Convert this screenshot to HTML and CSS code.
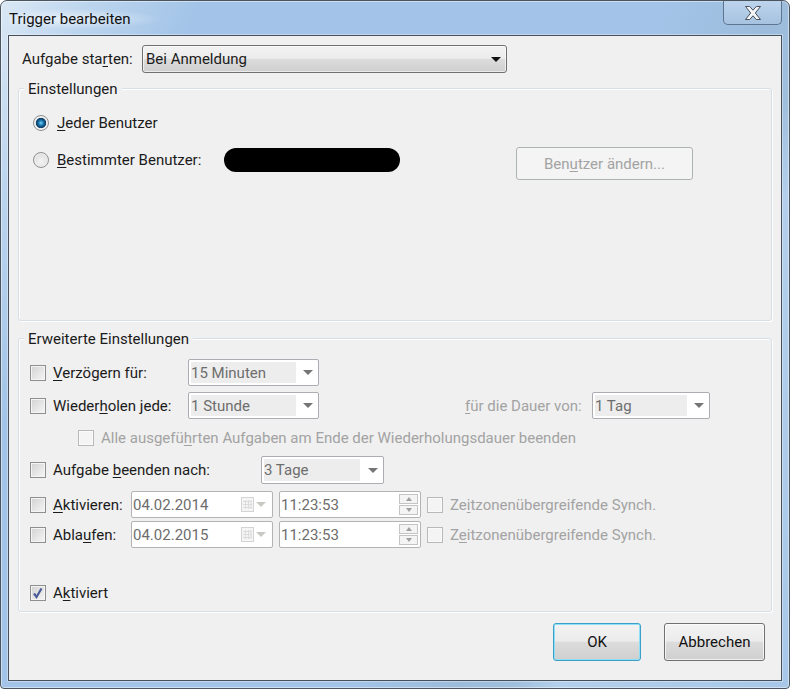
FILE: index.html
```html
<!DOCTYPE html>
<html lang="de">
<head>
<meta charset="utf-8">
<title>Trigger bearbeiten</title>
<link rel="stylesheet" href="styles.css">
</head>
<body>
<div class="window">
  <header class="titlebar">
    <span class="title">Trigger bearbeiten</span>
    <div class="close">
      <svg width="18" height="16" viewBox="0 0 18 16"><path d="M1.500 1.500h4.200L9 5.200l3.300-3.700h4.200L11.300 8l5.200 6.500h-4.200L9 10.800l-3.300 3.700H1.500L6.700 8z" fill="#f4f6f8" stroke="#47505c" stroke-width="1"/></svg>
    </div>
  </header>
  <main class="client">
    <div class="start-row">
      <span class="start-label">Aufgabe sta<u>r</u>ten:</span>
      <div class="combo-main">
        <span>Bei Anmeldung</span>
        <i class="arrow-dark"></i>
      </div>
    </div>

    <section class="group group-settings">
      <span class="legend">Einstellungen</span>
      <div class="radio-row">
        <span class="radio radio-on"></span>
        <span class="radio-label"><u>J</u>eder Benutzer</span>
      </div>
      <div class="radio-row radio-row-2">
        <span class="radio"></span>
        <span class="radio-label radio-label-user"><u>B</u>estimmter Benutzer:</span>
        <span class="redacted"></span>
        <button class="user-btn" type="button">Ben<u>u</u>tzer ändern...</button>
      </div>
    </section>

    <section class="group group-advanced">
      <span class="legend">Erweiterte Einstellungen</span>

      <div class="row">
        <span class="check"></span>
        <span class="lab lab-a"><u>V</u>erzögern für:</span>
        <div class="combo w131"><span class="combo-text w107">15 Minuten</span><i class="arrow"></i></div>
      </div>

      <div class="row row-2">
        <span class="check"></span>
        <span class="lab lab-a">Wieder<u>h</u>olen jede:</span>
        <div class="combo w131"><span class="combo-text w107">1 Stunde</span><i class="arrow"></i></div>
        <span class="lab disabled dur"><u>f</u>ür die Dauer von:</span>
        <div class="combo w118"><span class="combo-text w94">1 Tag</span><i class="arrow"></i></div>
      </div>

      <div class="row row-3">
        <span class="check check-off"></span>
        <span class="lab disabled">Alle ausgefü<u>h</u>rten Aufgaben am Ende der Wiederholungsdauer beenden</span>
      </div>

      <div class="row row-4">
        <span class="check"></span>
        <span class="lab lab-b">Aufgabe <u>b</u>eenden nach:</span>
        <div class="combo w123"><span class="combo-text w96">3 Tage</span><i class="arrow"></i></div>
      </div>

      <div class="row row-5">
        <span class="check"></span>
        <span class="lab lab-c"><u>A</u>ktivieren:</span>
        <div class="field">
          <span class="field-text">04.02.2014</span>
          <svg class="cal" width="15" height="18" viewBox="0 0 15 18"><rect x="1.500" y="1.500" width="12" height="14" fill="#f5f5f5" stroke="#d4d4d4"/><path d="M3 5.500h9M3 8.500h9M3 11.500h9M5.500 4v9M8.500 4v9M11 4v9" stroke="#dcdcdc"/></svg>
          <i class="arrow arrow-pale"></i>
        </div>
        <div class="field field-time">
          <span class="field-text">11:23:53</span>
          <div class="spin"><span class="spin-btn"><i class="up"></i></span><span class="spin-btn"><i class="down"></i></span></div>
        </div>
        <span class="check check-off tz"></span>
        <span class="lab disabled">Ze<u>i</u>tzonenübergreifende Synch.</span>
      </div>

      <div class="row row-6">
        <span class="check"></span>
        <span class="lab lab-c">Abla<u>u</u>fen:</span>
        <div class="field">
          <span class="field-text">04.02.2015</span>
          <svg class="cal" width="15" height="18" viewBox="0 0 15 18"><rect x="1.500" y="1.500" width="12" height="14" fill="#f5f5f5" stroke="#d4d4d4"/><path d="M3 5.500h9M3 8.500h9M3 11.500h9M5.500 4v9M8.500 4v9M11 4v9" stroke="#dcdcdc"/></svg>
          <i class="arrow arrow-pale"></i>
        </div>
        <div class="field field-time">
          <span class="field-text">11:23:53</span>
          <div class="spin"><span class="spin-btn"><i class="up"></i></span><span class="spin-btn"><i class="down"></i></span></div>
        </div>
        <span class="check check-off tz"></span>
        <span class="lab disabled">Z<u>e</u>itzonenübergreifende Synch.</span>
      </div>

      <div class="row row-7">
        <span class="check check-on">
          <svg width="14" height="14" viewBox="0 0 14 14"><path d="M3 7.500l2.500 3.500L10.500 2.500" fill="none" stroke="#4a5d99" stroke-width="2.200"/></svg>
        </span>
        <span class="lab">A<u>k</u>tiviert</span>
      </div>
    </section>

    <div class="actions">
      <button class="btn btn-ok" type="button">OK</button>
      <button class="btn btn-cancel" type="button">Abbrechen</button>
    </div>
  </main>
</div>
</body>
</html>
```
FILE: styles.css
```css
* { box-sizing: border-box; }
html, body { margin: 0; padding: 0; background: #fff; }
body { width: 790px; height: 689px; overflow: hidden; font: 15px/20px Roboto, "Open Sans", sans-serif; color: #1b1b1b; }
u { text-decoration-thickness: 1px; text-underline-offset: 2px; }
i { display: block; }

.window {
  width: 790px; height: 689px; padding: 0 7px 7px;
  display: flex; flex-direction: column;
  border: 1px solid #4a5560; border-radius: 7px 7px 4px 4px;
  background: linear-gradient(115deg, #dbe8f5 0, #bcd5ee 8%, #a3c4e8 18%, #a3c4e8 60%, #9dbcdc 70%, #a0bfdd 75%, #b3cfeb 79%, #a8c7e8 100%);
  box-shadow: inset 0 0 0 1px rgba(255,255,255,.45);
}
.titlebar { height: 34px; flex: none; display: flex; justify-content: space-between; align-items: flex-start; position: relative; }
.title {
  margin: 8px 0 0 1px; padding: 0 30px 0 0; line-height: 20px; font-size: 15px; color: #111;
  background: radial-gradient(ellipse at 40% 50%, rgba(255,255,255,.6), rgba(255,255,255,0) 72%);
}
.close {
  width: 59px; height: 24px; margin-right: 0;
  border: 1px solid #5d7590; border-top: 0; border-radius: 0 0 5px 5px;
  background: linear-gradient(#bdd4ec, #a6c2e0);
  display: flex; align-items: center; justify-content: center;
}

.client {
  flex: 1; background: #f0f0f0;
  border: 1px solid #46505c; box-shadow: 0 0 0 1px rgba(255,255,255,.35);
  padding: 9px 9px 0;
}
.start-row { display: flex; align-items: center; height: 28px; padding-left: 4px; }
.start-label { width: 120px; }
.combo-main {
  width: 365px; height: 28px; padding: 0 5px 0 3px;
  border: 1px solid #707070; border-radius: 3px;
  background: linear-gradient(#f3f3f3 0, #ebebeb 48%, #dcdcdc 50%, #cfcfcf 100%);
  box-shadow: inset 0 0 0 1px rgba(255,255,255,.6);
  display: flex; align-items: center; justify-content: space-between;
}
.arrow-dark { width: 0; height: 0; border: 5px solid transparent; border-top: 5px solid #111; border-bottom: 0; }

.group {
  position: relative; width: 754px;
  border: 1px solid #d5dfe5; border-radius: 3px;
  box-shadow: inset 1px 1px 0 #fff, 1px 1px 0 #fff;
}
.group-settings { height: 233px; margin-top: 15px; padding: 24px 0 0 14px; }
.group-advanced { height: 274px; margin-top: 17px; padding: 20px 0 0 11px; }
.legend { position: absolute; top: -10px; left: 5px; padding: 0 4px; background: #f0f0f0; }

.radio-row { display: flex; align-items: center; height: 20px; }
.radio-row-2 { height: 24px; margin-top: 15px; }
.radio {
  width: 16px; height: 16px; flex: none; border-radius: 50%;
  border: 1px solid #8e8f8f;
  background: radial-gradient(circle at 50% 60%, #f4f4f4 0, #e4e4e4 55%, #cfcfcf 100%);
  box-shadow: inset 0 0 0 1px #f2f2f2;
}
.radio-on { background: radial-gradient(circle 5.500px at 50% 50%, #7fd6f7 0, #2588c0 2px, #0e4a78 4px, #123f66 4.800px, #e8e8e8 5.500px); }
.radio-label { margin-left: 8px; }
.radio-label-user { width: 167px; }
.redacted { width: 176px; height: 24px; background: #000; border-radius: 12px; flex: none; }
.user-btn {
  width: 177px; height: 33px; margin: -1px 0 0 116px; padding: 0; flex: none; align-self: flex-start;
  border: 1px solid #adb2b5; border-radius: 3px; background: #f4f4f4;
  font: inherit; color: #a3a3a3;
}

.row { display: flex; align-items: center; height: 27px; }
.row-2 { margin-top: 6px; }
.row-3 { height: 24px; margin-top: 7px; padding-left: 48px; }
.row-4 { height: 28px; margin-top: 6px; }
.row-5 { margin-top: 7px; }
.row-6 { margin-top: 3px; }
.row-7 { height: 20px; margin-top: 35px; }

.check {
  width: 16px; height: 16px; flex: none; margin-right: 7px;
  border: 1px solid #8e8f8f;
  background: linear-gradient(135deg, #d2d2d2, #f6f6f6);
  box-shadow: inset 0 0 0 1px #f4f4f4;
  display: flex; align-items: center; justify-content: center;
}
.check-off { border-color: #b9b9b9; background: #f4f4f4; box-shadow: inset 0 0 0 1px #fafafa; }
.check-on svg { display: block; }
.lab-a { width: 135px; }
.lab-b { width: 208px; }
.lab-c { width: 78px; }
.disabled { color: #a3a3a3; }
.dur { width: 127px; margin-left: 146px; }

.combo {
  height: 27px; padding: 2px 0 2px 2px; flex: none;
  background: #fff; border: 1px solid #abadb3; border-radius: 2px;
  display: flex; align-items: stretch; justify-content: space-between; color: #6d6d6d;
}
.row-4 .combo { height: 28px; }
.w131 { width: 131px; }
.w118 { width: 118px; }
.w123 { width: 123px; }
.combo-text { background: #ededed; padding-left: 0; line-height: 23px; }
.w107 { width: 105px; }
.w94 { width: 92px; }
.w96 { width: 96px; }
.arrow {
  width: 0; height: 0; align-self: center; margin-right: 5px;
  border: 5px solid transparent; border-top: 5px solid #757575; border-bottom: 0;
}
.arrow-pale { border-top-color: #c9c9c4; margin: 0 0 0 1px; }

.field {
  width: 142px; height: 27px; flex: none; margin-right: 6px; padding-left: 1px;
  background: #fff; border: 1px solid #b3b3b3; border-radius: 2px;
  display: flex; align-items: center; color: #6d6d6d;
}
.field-text { width: 107px; }
.cal { flex: none; }
.field-time { padding-right: 2px; justify-content: space-between; }
.spin { display: flex; flex-direction: column; gap: 1px; }
.spin-btn {
  width: 19px; height: 10px; border: 1px solid #c4c4c4; background: #f4f4f4;
  display: flex; align-items: center; justify-content: center;
}
.up { width: 0; height: 0; border: 3px solid transparent; border-bottom: 4px solid #a0a0a0; border-top: 0; }
.down { width: 0; height: 0; border: 3px solid transparent; border-top: 4px solid #a0a0a0; border-bottom: 0; }

.actions { display: flex; justify-content: flex-end; gap: 23px; margin-top: 11px; padding-right: 7px; }
.btn {
  height: 38px; padding: 0; font: inherit; color: #111;
  border: 1px solid #707070; border-radius: 3px;
  background: linear-gradient(#f3f3f3 0, #ebebeb 48%, #dcdcdc 50%, #cfcfcf 100%);
  box-shadow: inset 0 0 0 1px rgba(255,255,255,.7);
}
.btn-ok { width: 88px; border-color: #3c9fc8; box-shadow: inset 0 0 0 1px #8fe0f6; }
.btn-cancel { width: 101px; }
```
